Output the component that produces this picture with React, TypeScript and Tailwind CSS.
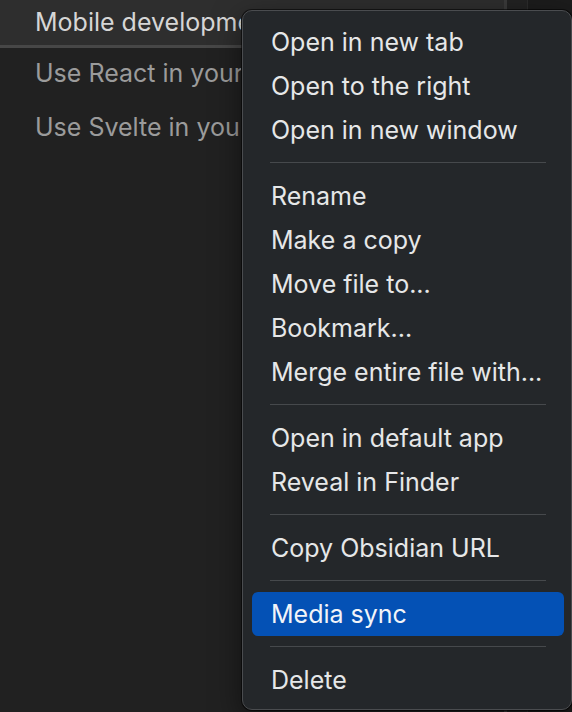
import React from "react";

type Entry = { label: string; active?: boolean } | "sep";

const entries: Entry[] = [
  { label: "Open in new tab" },
  { label: "Open to the right" },
  { label: "Open in new window" },
  "sep",
  { label: "Rename" },
  { label: "Make a copy" },
  { label: "Move file to..." },
  { label: "Bookmark..." },
  { label: "Merge entire file with..." },
  "sep",
  { label: "Open in default app" },
  { label: "Reveal in Finder" },
  "sep",
  { label: "Copy Obsidian URL" },
  "sep",
  { label: "Media sync", active: true },
  "sep",
  { label: "Delete" },
];

export default function App() {
  return (
    <div className="relative w-[572px] h-[712px] overflow-hidden flex bg-[#1c1c1c] font-['Inter',sans-serif] text-[25px] antialiased">
      <div className="w-[507px] shrink-0 bg-[#212121] border-r-[3px] border-[#3a3a3a] flex flex-col">
        <div className="h-[45px] bg-[#2e2e2e] pl-[35px] flex items-center text-[#d6d6d6]">
          <div className="w-[206px] overflow-hidden whitespace-nowrap">Mobile development</div>
        </div>
        <div className="h-[3px] bg-[#474747]" />
        <div className="flex flex-col -mt-[1px]">
          <div className="h-[54px] pl-[35px] flex items-center text-[#9b9b9b]">
            <div className="w-[206px] overflow-hidden whitespace-nowrap">Use React in your projects</div>
          </div>
          <div className="h-[54px] pl-[35px] flex items-center text-[#9b9b9b]">
            <div className="w-[206px] overflow-hidden whitespace-nowrap">Use Svelte in your projects</div>
          </div>
        </div>
      </div>
      <div className="w-[21px] shrink-0 bg-[#222222] border-r border-[#2c2c2c]" />
      <div className="flex-1 bg-[#1c1c1c]" />

      <div className="absolute left-[242px] top-[10px] w-[330px] h-[700px] rounded-[10px] bg-[#24272a] border border-[#4a4c4f] shadow-[0_0_0_1px_rgba(0,0,0,0.55),0_10px_30px_rgba(0,0,0,0.5)] pt-[9px] pl-[9px] pr-[7px] flex flex-col">
        {entries.map((e, i) =>
          e === "sep" ? (
            <div key={i} className="pt-[10px] pb-[11px] px-[18px]">
              <div className="h-px bg-[#46494c]" />
            </div>
          ) : (
            <div
              key={i}
              className={
                e.active
                  ? "h-[44px] shrink-0 flex items-center pl-[19px] pt-[2px] rounded-[6px] bg-[#0451b5] text-[#f2f4f8] whitespace-nowrap"
                  : "h-[44px] shrink-0 flex items-center pl-[19px] pt-[2px] text-[#e6e7e8] whitespace-nowrap"
              }
            >
              {e.label}
            </div>
          )
        )}
      </div>
    </div>
  );
}
